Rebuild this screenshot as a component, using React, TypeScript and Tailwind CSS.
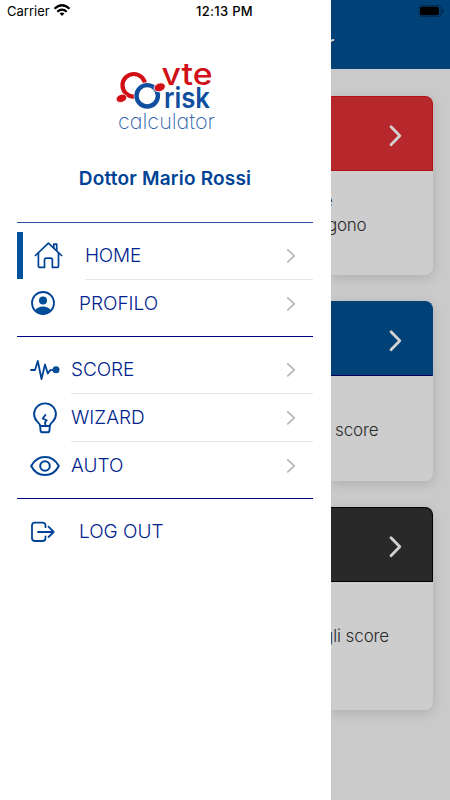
import React from 'react';
import clsx from 'clsx';

const HomeIcon = () => (
  <svg width="30" height="30" viewBox="0 0 30 30" fill="none" stroke="#004396" strokeWidth="1.7" strokeLinecap="round" strokeLinejoin="round">
    <path d="M1.4 14.5 14.4 2.1 27.6 14.5" />
    <path d="M4.4 12.2V25.2q0 1.2 1.2 1.2H10.5V19q0-1.9 1.9-1.9h4.1q1.9 0 1.9 1.9v7.4h4.9q1.2 0 1.2-1.2V12.2" />
    <path d="M19.8 6.5V3.2h2.9v6" />
  </svg>
);

const ProfileIcon = () => (
  <svg className="-mt-[2px]" width="24" height="24" viewBox="0 0 24 24" fill="none">
    <circle cx="12" cy="12" r="11" stroke="#004396" strokeWidth="1.8" />
    <circle cx="12" cy="9.4" r="4" fill="#004d98" />
    <path d="M4.2 19.2C6 16.5 8.6 15.4 12 15.4s6 1.1 7.8 3.8C17.6 21.6 15 22.9 12 22.9s-5.6-1.3-7.8-3.7z" fill="#004d98" />
  </svg>
);

const ScoreIcon = () => (
  <svg width="32" height="24" viewBox="0 0 32 24" fill="none" stroke="#004396" strokeWidth="1.8" strokeLinecap="round" strokeLinejoin="round">
    <path d="M2 12H6L8.8 3 12.5 21 16 6.5 18.8 15.5 21.2 12.2H25" />
    <circle cx="27" cy="11.8" r="3.5" fill="#004d98" stroke="none" />
  </svg>
);

const WizardIcon = () => (
  <svg className="-mt-px" width="30" height="32" viewBox="0 0 30 32" fill="none" stroke="#004396" strokeWidth="1.9" strokeLinecap="round" strokeLinejoin="round">
    <path d="M10.3 24C10 21.8 8.6 20.8 7 19.3A10.9 10.7 0 1 1 23 19.3C21.4 20.8 20 21.8 19.7 24Z" />
    <path d="M10.2 24 10.5 28.3q.2 2 2.2 2h4.6q2 0 2.2-2l.3-4.3" />
    <path d="M15.4 13 12.7 16.5l4 1.8-1.8 2.4.8 3" />
  </svg>
);

const AutoIcon = () => (
  <svg className="-mt-px" width="32" height="24" viewBox="0 0 32 24" fill="none" stroke="#004396" strokeWidth="2">
    <path d="M2.2 12C5 6.5 10 2.9 16 2.9S27 6.5 29.8 12C27 17.5 22 21.1 16 21.1S5 17.5 2.2 12Z" strokeLinejoin="round" />
    <circle cx="16" cy="12" r="4.8" />
  </svg>
);

const LogoutIcon = () => (
  <svg className="-mt-px" width="26" height="24" viewBox="0 0 26 24" fill="none" stroke="#004396" strokeWidth="1.8" strokeLinecap="round" strokeLinejoin="round">
    <path d="M16.5 7.2V5.6q0-3-3-3H6q-3 0-3 3V18q0 3 3 3h7.5q3 0 3-3v-1.5" />
    <path d="M9 12H24.5M19.5 6.7 24.7 12 19.5 17" />
  </svg>
);

const Logo = () => (
  <svg width="110" height="80" viewBox="110 55 110 80" fill="none">
    <circle cx="133.8" cy="85.3" r="11.3" stroke="#d10f16" strokeWidth="4.2" />
    <ellipse cx="121.5" cy="98.3" rx="5.4" ry="3.9" fill="#d10f16" stroke="#fff" strokeWidth=".6" transform="rotate(-20 121.5 98.3)" />
    <circle cx="147.2" cy="95.8" r="13.5" fill="#fff" />
    <circle cx="147.2" cy="95.8" r="10.7" stroke="#104f9f" strokeWidth="4.4" />
    <ellipse cx="159.7" cy="87.3" rx="5.8" ry="4.2" fill="#d10f16" stroke="#fff" strokeWidth=".8" transform="rotate(-20 159.7 87.3)" />
    <g transform="translate(0 85.2) scale(1 1.22)">
      <text x="161.5" y="0" textLength="51" lengthAdjust="spacingAndGlyphs" fontFamily="Inter" fontWeight="500" fontSize="25.5" fill="#d10f16">vte</text>
    </g>
    <text x="164" y="107.7" textLength="46" lengthAdjust="spacingAndGlyphs" fontFamily="Inter" fontWeight="600" fontSize="28" fill="#104f9f">risk</text>
    <text className="[font-feature-settings:'cv11']" x="118" y="128.6" textLength="97" lengthAdjust="spacingAndGlyphs" fontFamily="Inter" fontWeight="200" fontSize="22" fill="#2e65ab">calculator</text>
  </svg>
);

type MenuItem = {
  label: string;
  icon: React.ReactNode;
  iconClass: string;
  tracking: string;
  active?: boolean;
  arrow?: boolean;
  divider?: boolean;
};

const groups: MenuItem[][] = [
  [
    { label: 'HOME', icon: <HomeIcon />, iconClass: 'w-[68px] pl-[17px]', tracking: 'tracking-[-0.2px]', active: true, arrow: true, divider: true },
    { label: 'PROFILO', icon: <ProfileIcon />, iconClass: 'w-[62px] pl-[14px]', tracking: 'tracking-[0px]', arrow: true },
  ],
  [
    { label: 'SCORE', icon: <ScoreIcon />, iconClass: 'w-[54px] pl-[12px]', tracking: 'tracking-[-0.1px]', arrow: true, divider: true },
    { label: 'WIZARD', icon: <WizardIcon />, iconClass: 'w-[54px] pl-[13px]', tracking: 'tracking-[0px]', arrow: true, divider: true },
    { label: 'AUTO', icon: <AutoIcon />, iconClass: 'w-[54px] pl-[12px]', tracking: 'tracking-[0px]', arrow: true },
  ],
  [{ label: 'LOG OUT', icon: <LogoutIcon />, iconClass: 'w-[62px] pl-[12px]', tracking: 'tracking-[0px]' }],
];

const MenuRow = ({ item }: { item: MenuItem }) => (
  <div className="relative flex h-12 items-center">
    {item.active && <span className="absolute left-0 top-0 h-[47px] w-[6px] bg-[#00529c]" />}
    <span className={clsx('shrink-0', item.iconClass)}>{item.icon}</span>
    <div className={clsx('flex h-full flex-1 items-center justify-between border-b', item.divider ? 'border-[#e6e6e6]' : 'border-transparent')}>
      <span className={clsx('pt-[2px] text-[19px] font-light text-[#00238e]', item.tracking)}>{item.label}</span>
      {item.arrow && (
        <svg className="mr-[17px]" width="10" height="16" viewBox="0 0 10 16" fill="none" stroke="#b9b9b9" strokeWidth="1.8" strokeLinecap="round" strokeLinejoin="round">
          <path d="M1.8 1.8 8.3 7.8 1.8 13.8" />
        </svg>
      )}
    </div>
  </div>
);

const Drawer = () => (
  <aside className="w-[331px] shrink-0 bg-white pl-[17px] pr-[18px]">
    <div className="-ml-[17px] flex h-[55px] items-start text-[13px] leading-[23px] text-black">
      <span className="ml-[7px] w-[46px] tracking-[0px]">Carrier</span>
      <svg className="mt-[4px]" width="18" height="13" viewBox="0 0 18 13" fill="none" stroke="#000" strokeWidth="2.2">
        <path d="M1.5 4.7Q9-2.2 16.5 4.7M4.3 7.7Q9 3.4 13.7 7.7" />
        <path d="M6.6 9.5Q9 7.5 11.4 9.5L9 12z" fill="#000" stroke="none" />
      </svg>
      <span className="ml-[125px] whitespace-nowrap font-medium tracking-[0.3px]">12:13 PM</span>
    </div>
    <div className="h-[80px] pl-[93px]">
      <Logo />
    </div>
    <h1 className="mt-[32px] h-[55px] text-center text-[19px] font-semibold leading-6 tracking-[0.2px] text-[#004396]">Dottor Mario Rossi</h1>
    {groups.map((group, i) => (
      <div key={i} className={clsx('border-t pb-[8px] pt-[9px]', i === 0 ? 'border-[#2c4f9e]' : 'border-[#00007d]')}>
        {group.map((item) => (
          <MenuRow key={item.label} item={item} />
        ))}
      </div>
    ))}
  </aside>
);

const Card = ({ color, height, children }: { color: string; height: string; children: React.ReactNode }) => (
  <div className={clsx('w-[102px] rounded-r-[8px] bg-[#cdcdcd] shadow-[0_3px_12px_rgba(0,0,0,0.14)]', height)}>
    <div className={clsx('flex h-[75px] items-center justify-end rounded-tr-[8px] border border-l-0 pr-[29px]', color)}>
      <svg className="mt-[4px]" width="16" height="24" viewBox="0 0 16 24" fill="none" stroke="#d2d2d2" strokeWidth="2.8" strokeLinecap="round" strokeLinejoin="round">
        <path d="M4 2.8 12.8 11.8 4 20.8" />
      </svg>
    </div>
    <div className="text-[17px] font-light leading-6 text-[#2b2b2b]">{children}</div>
  </div>
);

export default function App() {
  return (
    <div className="flex h-[800px] w-[450px] overflow-hidden bg-[#cacaca] font-['Inter',sans-serif]">
      <Drawer />
      <main className="w-[119px] shrink-0 overflow-hidden">
        <header className="relative h-[69px] bg-[#004178]">
          <svg className="absolute left-[87px] top-[5px]" width="26" height="12" viewBox="0 0 26 12" fill="none">
            <rect x=".8" y=".5" width="22.4" height="11" rx="3" stroke="#00294d" />
            <rect x="2" y="1.7" width="19" height="8.6" rx="1.8" fill="#000" />
            <path d="M24.8 4v4" stroke="#00294d" strokeWidth="1.3" />
          </svg>
          <span className="absolute -left-[4px] top-[32px] text-[19px] font-medium leading-6 text-[#d2d2d2]">r</span>
        </header>
        <div className="flex flex-col gap-[26px] pt-[27px]">
          <Card color="border-[#b5101a] bg-[#b7282d]" height="h-[179px]">
            <p className="-ml-[8px] pt-[18px]">e</p>
            <p className="-ml-[4px] tracking-[-0.3px]">gono</p>
          </Card>
          <Card color="border-[#004178] border-b-[#00005c] bg-[#004178]" height="h-[180px]">
            <p className="ml-[4px] pt-[42px] tracking-[-0.1px]">score</p>
          </Card>
          <Card color="border-black bg-[#292929]" height="h-[203px]">
            <p className="-ml-[8px] whitespace-nowrap pt-[42px] tracking-[-0.1px]">gli score</p>
          </Card>
        </div>
      </main>
    </div>
  );
}
